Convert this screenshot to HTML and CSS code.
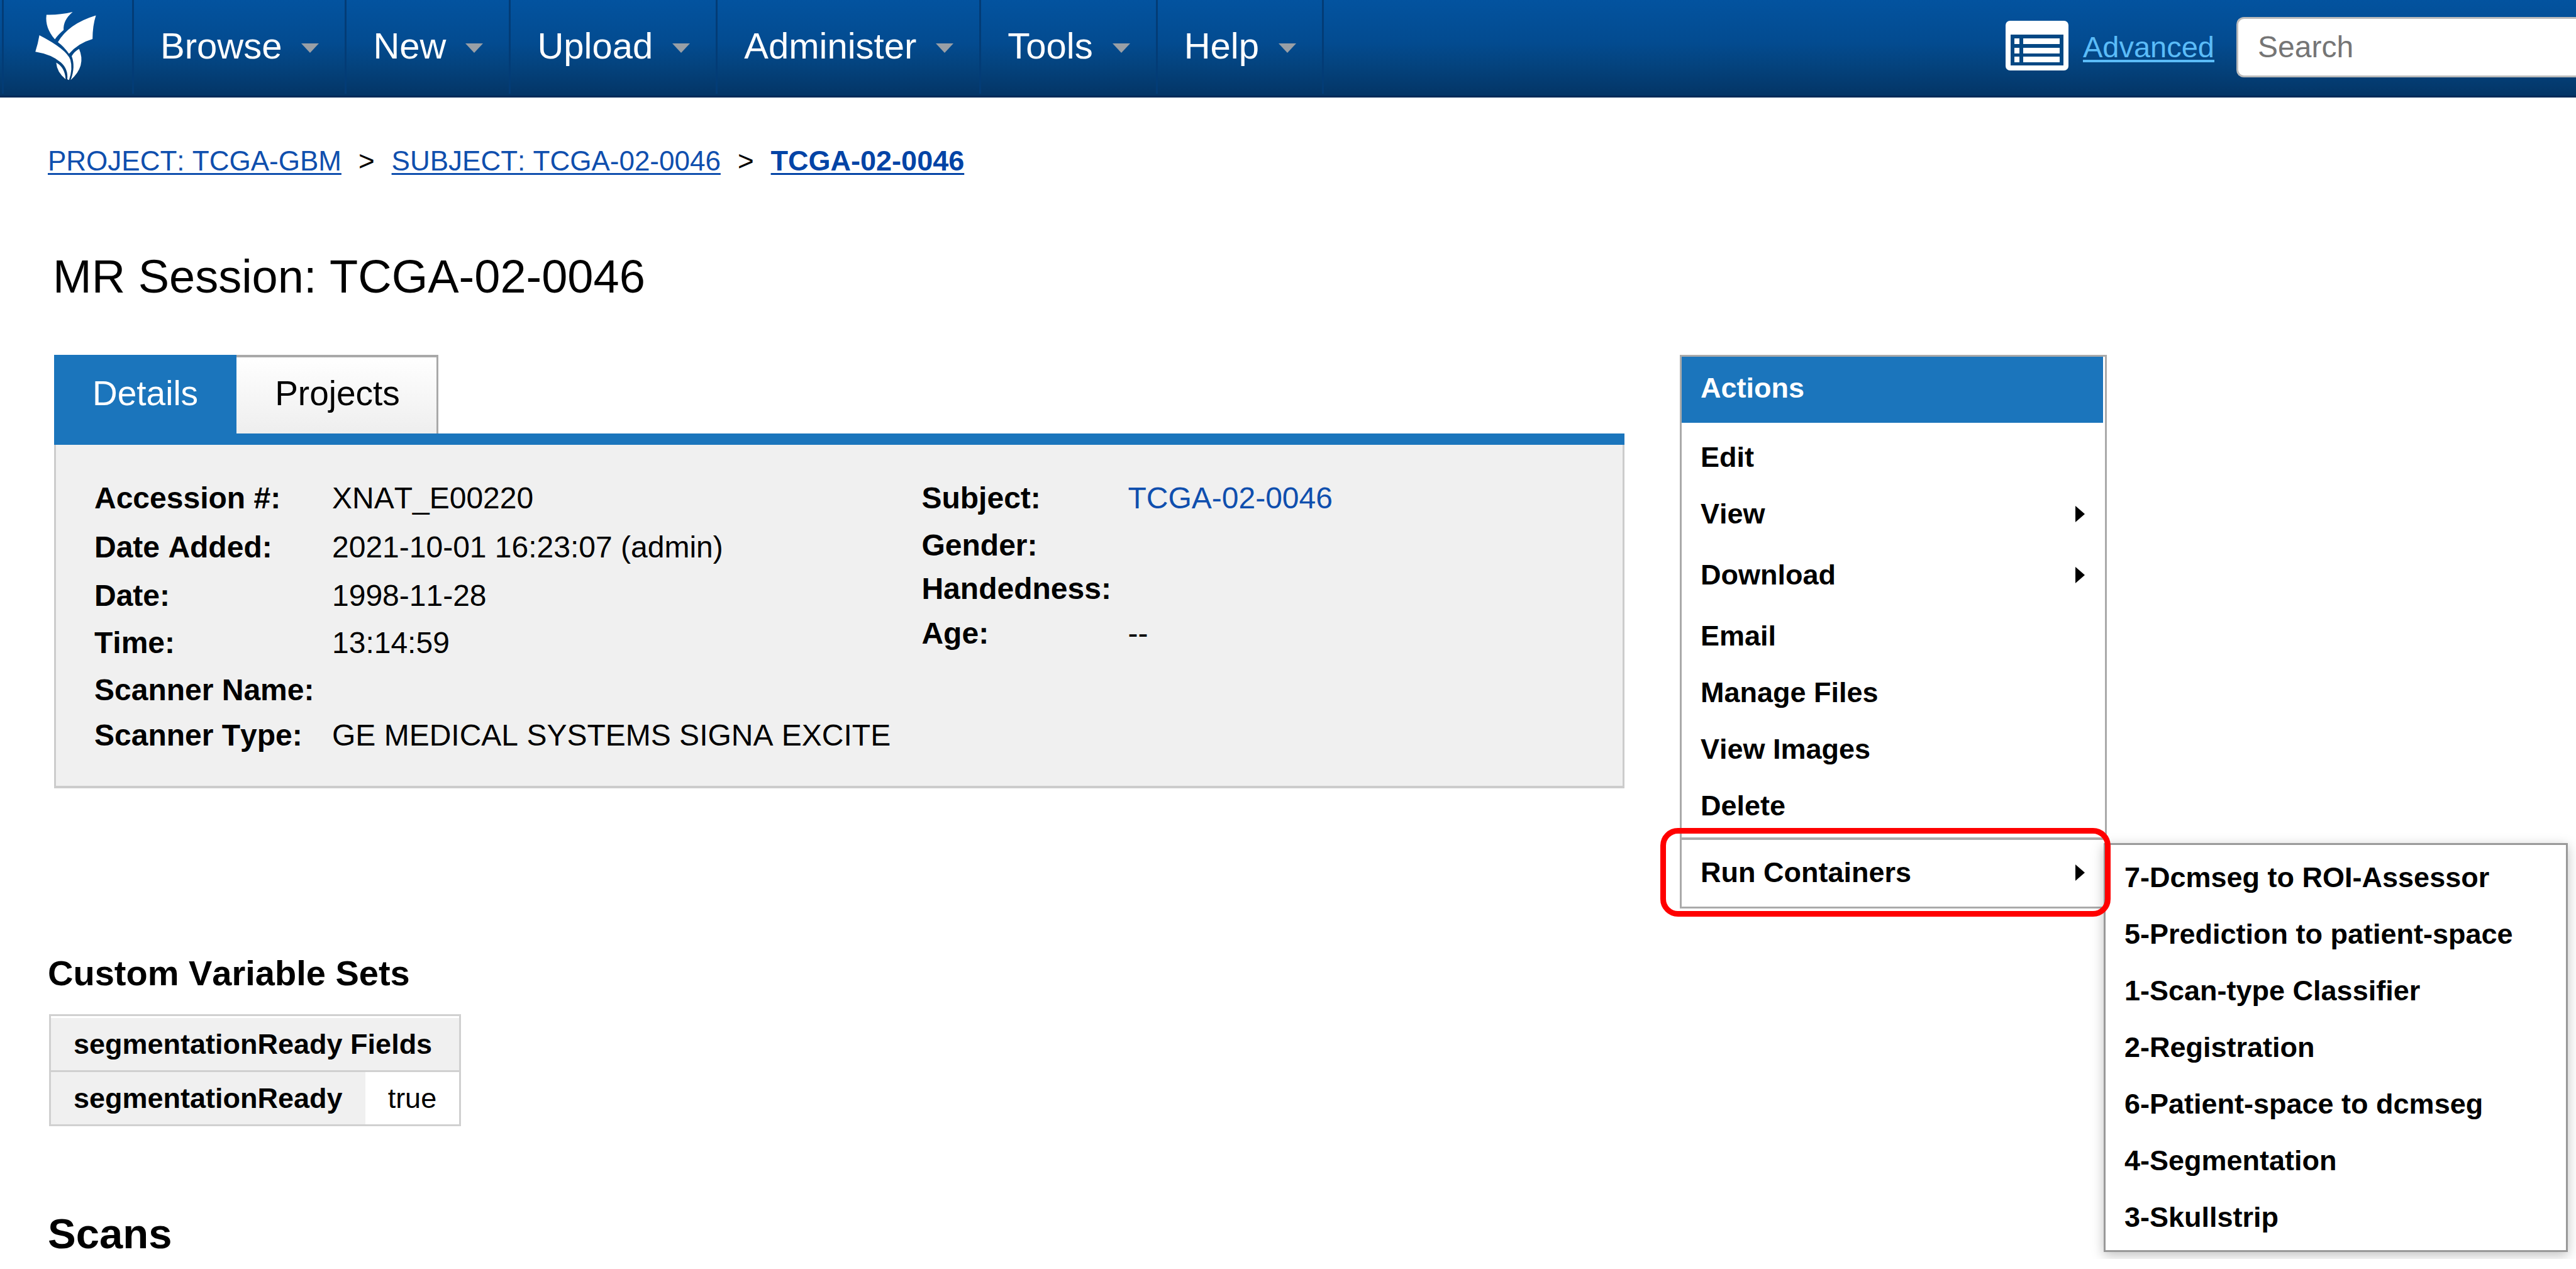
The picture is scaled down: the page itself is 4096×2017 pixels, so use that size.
FILE: index.html
```html
<!DOCTYPE html>
<html lang="en">
<head>
<meta charset="utf-8">
<title>MR Session: TCGA-02-0046</title>
<link rel="stylesheet" href="styles.css">
</head>
<body>
<header class="topbar">
  <a class="logo" href="#" aria-label="Home">
    <svg class="logo-mark" viewBox="100 50 200 370" preserveAspectRatio="none" aria-hidden="true">
      <g fill="#fff">
        <path d="M139 74 Q178 76 217 60 Q188 102 190 152 Q173 176 164 200 Q134 140 139 74Z"/>
        <path d="M286 77 Q276 130 276 198 Q232 220 206 274 Q192 238 173 214 Q204 120 286 77Z"/>
        <path d="M118 179 Q198 250 210 304 Q218 350 206 408 L201 404 Q204 352 182 318 Q154 276 106 263 Q114 222 118 179Z"/>
        <path d="M236 249 Q258 336 211 408 Q226 340 214 286 Q222 262 236 249Z"/>
        <path d="M168 319 Q194 344 196 404 Q170 368 168 319Z"/>
      </g>
    </svg>
  </a>
  <nav class="menu">
    <button class="menu-item" type="button">Browse<span class="caret"></span></button>
    <button class="menu-item" type="button">New<span class="caret"></span></button>
    <button class="menu-item" type="button">Upload<span class="caret"></span></button>
    <button class="menu-item" type="button">Administer<span class="caret"></span></button>
    <button class="menu-item" type="button">Tools<span class="caret"></span></button>
    <button class="menu-item" type="button">Help<span class="caret"></span></button>
  </nav>
  <div class="tools">
    <button class="list-button" type="button" aria-label="Stored searches">
      <svg viewBox="0 0 100 79" aria-hidden="true">
        <rect width="100" height="79" rx="7" fill="#fff"/>
        <rect x="8" y="22" width="84" height="49" fill="#044884"/>
        <g fill="#fff">
          <rect x="14" y="28" width="8" height="9"/><rect x="28" y="28" width="58" height="9"/>
          <rect x="14" y="43" width="8" height="9"/><rect x="28" y="43" width="58" height="9"/>
          <rect x="14" y="57" width="8" height="9"/><rect x="28" y="57" width="58" height="9"/>
        </g>
      </svg>
    </button>
    <a class="advanced" href="#">Advanced</a>
    <input class="search" type="text" placeholder="Search" aria-label="Search">
  </div>
</header>

<main class="page">
  <nav class="crumbs">
    <a href="#">PROJECT: TCGA-GBM</a>
    <span class="crumb-sep">&gt;</span>
    <a href="#">SUBJECT: TCGA-02-0046</a>
    <span class="crumb-sep">&gt;</span>
    <a class="current" href="#">TCGA-02-0046</a>
  </nav>
  <h1>MR Session: TCGA-02-0046</h1>

  <div class="columns">
    <div class="content">
      <section class="details">
        <div class="tabs">
          <button class="tab active" type="button">Details</button>
          <button class="tab" type="button">Projects</button>
        </div>
        <div class="panel">
          <dl class="facts session-facts">
            <dt>Accession #:</dt><dd>XNAT_E00220</dd>
            <dt>Date Added:</dt><dd>2021-10-01 16:23:07 (admin)</dd>
            <dt>Date:</dt><dd>1998-11-28</dd>
            <dt>Time:</dt><dd>13:14:59</dd>
            <dt>Scanner Name:</dt><dd></dd>
            <dt>Scanner Type:</dt><dd>GE MEDICAL SYSTEMS SIGNA EXCITE</dd>
          </dl>
          <dl class="facts subject-facts">
            <dt>Subject:</dt><dd><a href="#">TCGA-02-0046</a></dd>
            <dt>Gender:</dt><dd></dd>
            <dt>Handedness:</dt><dd></dd>
            <dt>Age:</dt><dd>--</dd>
          </dl>
        </div>
      </section>

      <h2 class="variables-title">Custom Variable Sets</h2>
      <table class="variables">
        <thead>
          <tr><th colspan="2" scope="colgroup">segmentationReady Fields</th></tr>
        </thead>
        <tbody>
          <tr><th scope="row">segmentationReady</th><td>true</td></tr>
        </tbody>
      </table>

      <h2 class="scans-title">Scans</h2>
    </div>

    <aside class="actions">
      <h3 class="actions-title">Actions</h3>
      <ul class="action-list">
        <li><a class="action" href="#">Edit</a></li>
        <li><a class="action parent" href="#">View<span class="arrow"></span></a></li>
        <li><a class="action parent" href="#">Download<span class="arrow"></span></a></li>
        <li><a class="action" href="#">Email</a></li>
        <li><a class="action" href="#">Manage Files</a></li>
        <li><a class="action" href="#">View Images</a></li>
        <li><a class="action" href="#">Delete</a></li>
      </ul>
      <div class="containers">
        <a class="action" href="#">Run Containers<span class="arrow"></span></a>
        <ul class="submenu">
          <li><a class="action" href="#">7-Dcmseg to ROI-Assessor</a></li>
          <li><a class="action" href="#">5-Prediction to patient-space</a></li>
          <li><a class="action" href="#">1-Scan-type Classifier</a></li>
          <li><a class="action" href="#">2-Registration</a></li>
          <li><a class="action" href="#">6-Patient-space to dcmseg</a></li>
          <li><a class="action" href="#">4-Segmentation</a></li>
          <li><a class="action" href="#">3-Skullstrip</a></li>
        </ul>
        <div class="highlight"></div>
      </div>
    </aside>
  </div>
</main>
</body>
</html>
```
FILE: styles.css
```css
* {
  box-sizing: border-box;
}

body {
  margin: 0;
  background: #fff;
  color: #000;
  font-family: "Liberation Sans", Arial, sans-serif;
  font-size: 48px;
  font-kerning: none;
}

h1, h2, h3, ul, dl, dd {
  margin: 0;
  padding: 0;
}

ul {
  list-style: none;
}

button {
  margin: 0;
  padding: 0;
  border: 0;
  background: none;
  color: inherit;
  font: inherit;
}

/* Top bar */

.topbar {
  display: flex;
  height: 155px;
  padding: 0 0 3px 3px;
  border-bottom: 3px solid #022a58;
  background: linear-gradient(#03539f, #034b90 45%, #04437e 68%, #043566);
}

.logo {
  display: block;
  width: 207px;
  padding: 16px 0 0 47px;
  border-left: 3px solid #033c76;
}

.logo-mark {
  display: block;
  width: 107px;
  height: 115px;
}

.menu {
  display: flex;
  border-right: 3px solid #033c76;
}

.menu-item {
  display: flex;
  align-items: center;
  gap: 31px;
  padding: 0 41px 5px 42px;
  border-left: 3px solid #033c76;
  color: #fff;
  font-size: 58px;
  font-kerning: normal;
}

.caret {
  margin-top: 9px;
  border: 14px solid transparent;
  border-top: 15px solid #999fa6;
  border-bottom: 0;
}

.tools {
  display: flex;
  align-items: center;
  margin-left: auto;
}

.list-button {
  width: 100px;
  height: 79px;
  margin: 0 23px 5px 0;
}

.list-button svg {
  display: block;
}

.advanced {
  margin-right: 35px;
  color: #5bbcf8;
  font-size: 47px;
  text-decoration-thickness: 4px;
  text-underline-offset: 4px;
}

.search {
  width: 540px;
  height: 96px;
  padding: 0 0 0 31px;
  border: 3px solid #bbb;
  border-right: 0;
  border-radius: 12px 0 0 12px;
  background: #fff;
  font: 48px "Liberation Sans", Arial, sans-serif;
}

.search::placeholder {
  color: #757575;
}

/* Page */

.page {
  padding: 71px 746px 0 76px;
}

a {
  color: #0f4fae;
}

.crumbs {
  display: flex;
  font-size: 44px;
  line-height: 60px;
}

.crumbs a {
  text-decoration-thickness: 3px;
  text-underline-offset: 4px;
}

.crumbs .current {
  color: #0344a6;
  font-size: 45px;
  font-weight: bold;
}

.crumb-sep {
  padding: 0 27px;
}

h1 {
  margin: 109px 0 79px;
  padding-left: 8px;
  font-size: 74px;
  font-weight: normal;
  line-height: 90px;
}

.columns {
  display: grid;
  grid-template-columns: minmax(0, 1fr) 679px;
  gap: 88px;
  align-items: start;
}

/* Details */

.details {
  margin-left: 10px;
}

.tabs {
  display: flex;
  height: 143px;
  border-bottom: 18px solid #1b75bc;
}

.tab {
  padding: 0 58px 8px 61px;
  border: 3px solid #a9a9a9;
  border-width: 4px 3px 0 0;
  background: linear-gradient(#fff, #eee);
  font-size: 55px;
}

.tab.active {
  border-color: #1b75bc;
  background: #1b75bc;
  color: #fff;
}

.panel {
  display: grid;
  grid-template-columns: 1316fr 1115fr;
  padding: 55px 0 50px 61px;
  border: 3px solid #ccc;
  border-width: 0 3px 4px;
  background: #f0f0f0;
}

.facts {
  display: grid;
  align-content: start;
  line-height: 60px;
}

.session-facts {
  grid-template-columns: 378px 1fr;
  grid-template-rows: 78px 77px 75px 75px 72px 60px;
}

.subject-facts {
  grid-template-columns: 328px 1fr;
  grid-template-rows: 75px 69px 71px 60px;
}

.facts dt {
  font-weight: bold;
}

.facts a {
  text-decoration: none;
}

/* Custom variables and scans */

.variables-title {
  margin: 259px 0 30px;
  font-size: 56px;
  line-height: 70px;
}

.variables {
  margin-left: 2px;
  border: 3px solid #d0d0d0;
  border-spacing: 0;
  font-size: 45px;
  line-height: 83px;
}

.variables th,
.variables td {
  padding: 0 36px;
  text-align: left;
}

.variables th {
  background: #f0f0f0;
}

.variables thead th {
  border-top: 3px solid #fff;
  border-bottom: 3px solid #d0d0d0;
}

.scans-title {
  margin-top: 131px;
  font-size: 67px;
  line-height: 80px;
}

/* Actions */

.actions {
  border: 3px solid #aaa;
  background: #fff;
  font-size: 45px;
  font-weight: bold;
}

.actions-title {
  margin: 0 3px 10px 0;
  padding: 0 30px 5px;
  background: #1b75bc;
  color: #fff;
  font-size: 45px;
  line-height: 100px;
}

.action-list {
  padding-bottom: 5px;
}

.action {
  display: flex;
  align-items: center;
  justify-content: space-between;
  padding: 0 32px 0 30px;
  color: #000;
  line-height: 90px;
  text-decoration: none;
}

.action.parent {
  padding-bottom: 7px;
}

.arrow {
  border: 13px solid transparent;
  border-left: 15px solid #000;
  border-right: 0;
}

.containers {
  position: relative;
  padding: 7px 0 9px;
  border-top: 4px solid #aaa;
}

.submenu {
  position: absolute;
  top: 5px;
  left: calc(100% - 2px);
  width: 738px;
  padding: 7px 0;
  border: 3px solid #999;
  background: #fff;
  box-shadow: 0 5px 18px rgba(0, 0, 0, 0.25);
}

.highlight {
  position: absolute;
  top: -19px;
  right: -9px;
  bottom: -16px;
  left: -34px;
  border: 9px solid #f00;
  border-radius: 28px;
  pointer-events: none;
}
```
